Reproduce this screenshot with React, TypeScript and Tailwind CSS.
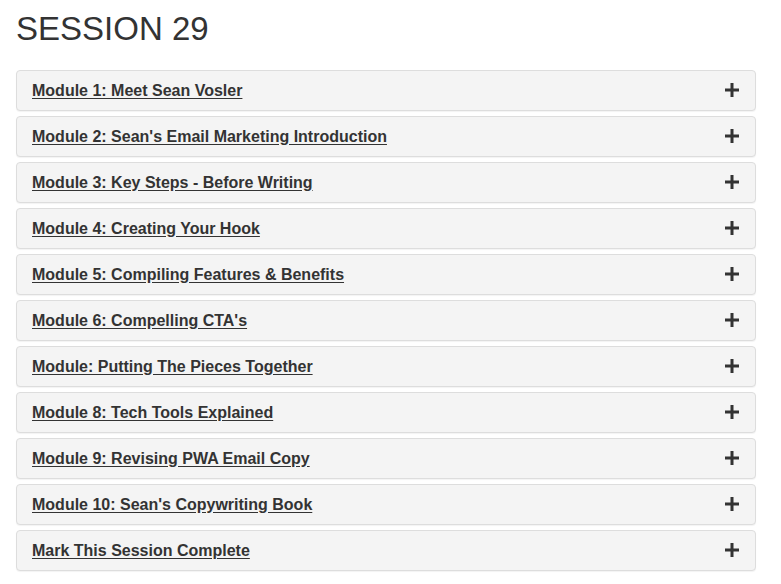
import React from "react";

const modules = [
    "Module 1: Meet Sean Vosler",
    "Module 2: Sean's Email Marketing Introduction",
    "Module 3: Key Steps - Before Writing",
    "Module 4: Creating Your Hook",
    "Module 5: Compiling Features & Benefits",
    "Module 6: Compelling CTA's",
    "Module: Putting The Pieces Together",
    "Module 8: Tech Tools Explained",
    "Module 9: Revising PWA Email Copy",
    "Module 10: Sean's Copywriting Book",
    "Mark This Session Complete",
];

const PlusIcon = () => (
    <svg width="14" height="14" viewBox="0 0 14 14" className="shrink-0 -mt-[2px]">
        <rect x="5.5" y="0" width="3" height="14" fill="#333" />
        <rect x="0" y="5.5" width="14" height="3" fill="#333" />
    </svg>
);

export default function App() {
    return (
        <div
            className="min-h-screen bg-white px-4 pt-[9px] text-[#333]"
            style={{ fontFamily: '"Liberation Sans", Arial, sans-serif' }}
        >
            <h1 className="text-[33px] leading-[40px] font-normal mb-[21px]">
                SESSION 29
            </h1>

            <div className="flex flex-col gap-[5px] w-[740px]">
                {modules.map((title, idx) => (
                    <div
                        key={idx}
                        className="h-[41px] flex items-center justify-between border border-[#ddd] rounded bg-[#f4f4f4] pl-[15px] pr-[16px] shadow-[0_1px_1px_rgba(0,0,0,0.05)]"
                    >
                        <a
                            href="#"
                            className="text-[16px] font-bold underline text-[#333] underline-offset-[2px]"
                        >
                            {title}
                        </a>
                        <PlusIcon />
                    </div>
                ))}
            </div>
        </div>
    );
}
